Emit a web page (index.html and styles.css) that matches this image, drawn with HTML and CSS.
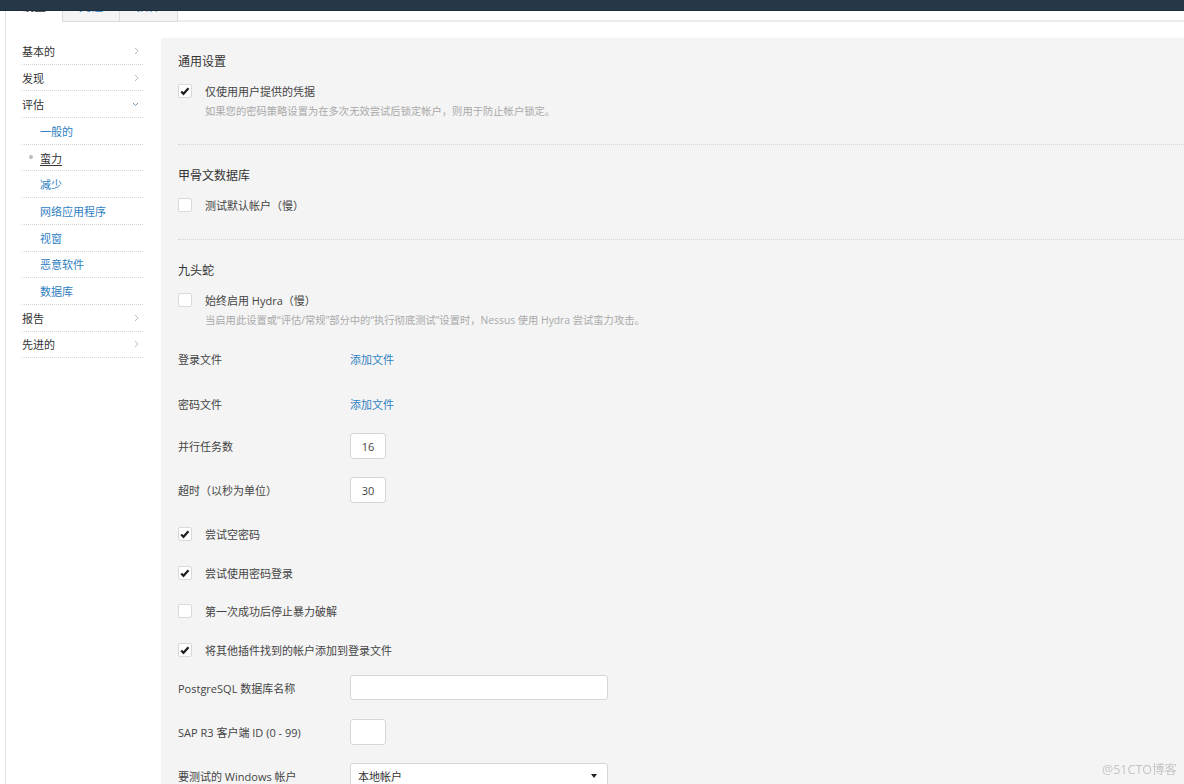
FILE: index.html
```html
<!DOCTYPE html>
<html lang="zh-CN">
<head>
<meta charset="utf-8">
<title>蛮力</title>
<link rel="stylesheet" href="styles.css">
</head>
<body>
<div class="topbar"></div>
<div class="page">
  <div class="tabs">
    <div class="tab active"><span>设置</span></div>
    <div class="tab"><span>凭证</span></div>
    <div class="tab last-tab"><span>插件</span></div>
    <div class="tabs-rest"></div>
  </div>
  <div class="layout">
    <nav class="sidebar">
      <div class="nav-item"><span>基本的</span><svg class="chev" width="5" height="8" viewBox="0 0 5 8"><path d="M1 1l3 3-3 3"/></svg></div>
      <div class="nav-item"><span>发现</span><svg class="chev" width="5" height="8" viewBox="0 0 5 8"><path d="M1 1l3 3-3 3"/></svg></div>
      <div class="nav-item"><span>评估</span><svg class="chev-down" width="7" height="5" viewBox="0 0 7 5"><path d="M1 1l2.5 2.5L6 1"/></svg></div>
      <div class="nav-item sub">一般的</div>
      <div class="nav-item sub current"><span class="dot"></span><span class="cur-text">蛮力</span></div>
      <div class="nav-item sub">减少</div>
      <div class="nav-item sub">网络应用程序</div>
      <div class="nav-item sub">视窗</div>
      <div class="nav-item sub">恶意软件</div>
      <div class="nav-item sub">数据库</div>
      <div class="nav-item"><span>报告</span><svg class="chev" width="5" height="8" viewBox="0 0 5 8"><path d="M1 1l3 3-3 3"/></svg></div>
      <div class="nav-item"><span>先进的</span><svg class="chev" width="5" height="8" viewBox="0 0 5 8"><path d="M1 1l3 3-3 3"/></svg></div>
    </nav>
    <main class="panel">
      <section class="section first">
        <div class="sec-title">通用设置</div>
        <div class="check-row"><span class="cb checked"><svg width="14" height="14" viewBox="0 0 14 14"><path d="M3.2 7.4l2.3 2.4 5-5.6"/></svg></span><span class="cb-label">仅使用用户提供的凭据</span></div>
        <div class="desc">如果您的密码策略设置为在多次无效尝试后锁定帐户，则用于防止帐户锁定。</div>
      </section>
      <section class="section">
        <div class="sec-title">甲骨文数据库</div>
        <div class="check-row"><span class="cb"></span><span class="cb-label">测试默认帐户（慢）</span></div>
      </section>
      <section class="section last">
        <div class="sec-title">九头蛇</div>
        <div class="check-row"><span class="cb"></span><span class="cb-label">始终启用 Hydra（慢）</span></div>
        <div class="desc">当启用此设置或“评估/常规”部分中的“执行彻底测试”设置时，Nessus 使用 Hydra 尝试蛮力攻击。</div>
        <div class="field first-field"><span class="field-label">登录文件</span><span class="link">添加文件</span></div>
        <div class="field second-field"><span class="field-label">密码文件</span><span class="link">添加文件</span></div>
        <div class="field third-field"><span class="field-label">并行任务数</span><span class="input small">16</span></div>
        <div class="field"><span class="field-label">超时（以秒为单位）</span><span class="input small">30</span></div>
        <div class="check-row opt"><span class="cb checked"><svg width="14" height="14" viewBox="0 0 14 14"><path d="M3.2 7.4l2.3 2.4 5-5.6"/></svg></span><span class="cb-label">尝试空密码</span></div>
        <div class="check-row opt"><span class="cb checked"><svg width="14" height="14" viewBox="0 0 14 14"><path d="M3.2 7.4l2.3 2.4 5-5.6"/></svg></span><span class="cb-label">尝试使用密码登录</span></div>
        <div class="check-row opt"><span class="cb"></span><span class="cb-label">第一次成功后停止暴力破解</span></div>
        <div class="check-row opt"><span class="cb checked"><svg width="14" height="14" viewBox="0 0 14 14"><path d="M3.2 7.4l2.3 2.4 5-5.6"/></svg></span><span class="cb-label">将其他插件找到的帐户添加到登录文件</span></div>
        <div class="field"><span class="field-label">PostgreSQL 数据库名称</span><span class="input wide"></span></div>
        <div class="field"><span class="field-label">SAP R3 客户端 ID (0 - 99)</span><span class="input small"></span></div>
        <div class="field"><span class="field-label">要测试的 Windows 帐户</span><span class="select"><span>本地帐户</span><span class="caret"></span></span></div>
      </section>
    </main>
  </div>
</div>
<div class="watermark">@51CTO博客</div>
</body>
</html>
```

FILE: styles.css
```css
html, body {
  margin: 0;
  padding: 0;
  overflow: hidden;
  background: #ffffff;
  height: 784px;
}

body {
  font-family: "Open Sans", "Noto Sans CJK SC", sans-serif;
  font-size: 11px;
  color: #444444;
}

.topbar {
  height: 10px;
  background: #263848;
  border-bottom: 1px solid #1d2c39;
}

.page {
  margin-left: 5px;
  border-left: 1px solid #e2e2e2;
  height: 773px;
}

.tabs {
  display: flex;
  height: 11px;
}

.tab {
  box-sizing: border-box;
  width: 57px;
  height: 11px;
  overflow: hidden;
  background: #f4f4f4;
  border-right: 1px solid #dcdcdc;
  border-bottom: 1px solid #dcdcdc;
  text-align: center;
  color: #2f7fc2;
  font-size: 12px;
}

.tab span {
  display: block;
  margin-top: -12px;
  line-height: 16px;
}

.tab.active {
  background: #ffffff;
  border-bottom: none;
  color: #333333;
}

.tab.last-tab {
  width: 58px;
}

.tabs-rest {
  flex: 1;
  height: 9px;
  border-bottom: 2px solid #ececec;
}

.layout {
  display: flex;
  margin-top: 16px;
  align-items: flex-start;
}

.sidebar {
  width: 121px;
  margin-left: 16px;
  margin-right: 18px;
  flex: none;
}

.nav-item {
  display: flex;
  align-items: center;
  justify-content: space-between;
  height: 25.7px;
  border-bottom: 1px dotted #d4d4d4;
  color: #333333;
  padding-right: 4px;
}

.chev path {
  fill: none;
  stroke: #bdbdbd;
  stroke-width: 1;
}

.chev-down path {
  fill: none;
  stroke: #6e93b8;
  stroke-width: 1;
}

.nav-item.sub {
  justify-content: flex-start;
  padding-left: 18px;
  color: #2f7fc2;
}

.nav-item.current {
  padding-left: 7px;
  color: #333333;
}

.dot {
  width: 4px;
  height: 4px;
  border-radius: 50%;
  background: #bcbcbc;
  margin-right: 7px;
  margin-top: -2px;
}

.cur-text {
  text-decoration: underline;
  text-underline-offset: 2px;
}

.panel {
  flex: 1;
  background: #f4f4f4;
  padding-left: 17px;
  height: 760px;
}

.section {
  padding: 23px 0 21px;
  border-bottom: 1px dotted #d6d6d6;
}

.section.first {
  padding-top: 16px;
}

.section.last {
  border-bottom: none;
}

.sec-title {
  height: 16px;
  line-height: 16px;
  font-size: 12px;
  color: #333333;
}

.check-row {
  display: flex;
  align-items: center;
  height: 26px;
  margin-top: 8px;
}

.cb {
  width: 14px;
  height: 14px;
  box-sizing: border-box;
  border: 1px solid #d9d9d9;
  border-radius: 2px;
  background: #ffffff;
  margin-right: 13px;
  flex: none;
}

.cb svg {
  display: block;
  margin: -1px 0 0 -1px;
}

.cb svg path {
  fill: none;
  stroke: #1f1f1f;
  stroke-width: 2.2;
}

.cb-label {
  color: #444444;
}

.desc {
  height: 14px;
  line-height: 14px;
  padding-left: 27px;
  font-size: 10.3px;
  color: #a9a9a9;
  margin-bottom: 5px;
}

.field {
  display: flex;
  align-items: center;
  height: 26px;
  margin-top: 18px;
}

.field.first-field {
  margin-top: 19px;
}

.field.second-field {
  margin-top: 19px;
}

.field.third-field {
  margin-top: 16px;
}

.field-label {
  width: 172px;
  flex: none;
  color: #444444;
}

.link {
  color: #2f7fc2;
}

.input {
  box-sizing: border-box;
  height: 26px;
  background: #ffffff;
  border: 1px solid #d6d6d6;
  border-radius: 3px;
  display: flex;
  align-items: center;
  justify-content: center;
  color: #444444;
}

.input.small {
  width: 36px;
}

.input.wide {
  width: 258px;
  height: 25px;
}

.check-row.opt {
  margin-top: 12.5px;
}

.field + .check-row.opt {
  margin-top: 18px;
}

.check-row.opt + .field {
  margin-top: 12px;
}

.select {
  box-sizing: border-box;
  width: 258px;
  height: 26px;
  background: #ffffff;
  border: 1px solid #d6d6d6;
  border-radius: 3px;
  display: flex;
  align-items: center;
  justify-content: space-between;
  padding: 0 10px 0 7px;
  color: #333333;
}

.caret {
  width: 0;
  height: 0;
  border-left: 3.5px solid transparent;
  border-right: 3.5px solid transparent;
  border-top: 4px solid #222222;
}

.watermark {
  position: fixed;
  right: 7px;
  bottom: 6px;
  font-size: 12.5px;
  color: #c4c4c4;
  font-family: "Open Sans", "Noto Sans CJK SC", sans-serif;
}
```
